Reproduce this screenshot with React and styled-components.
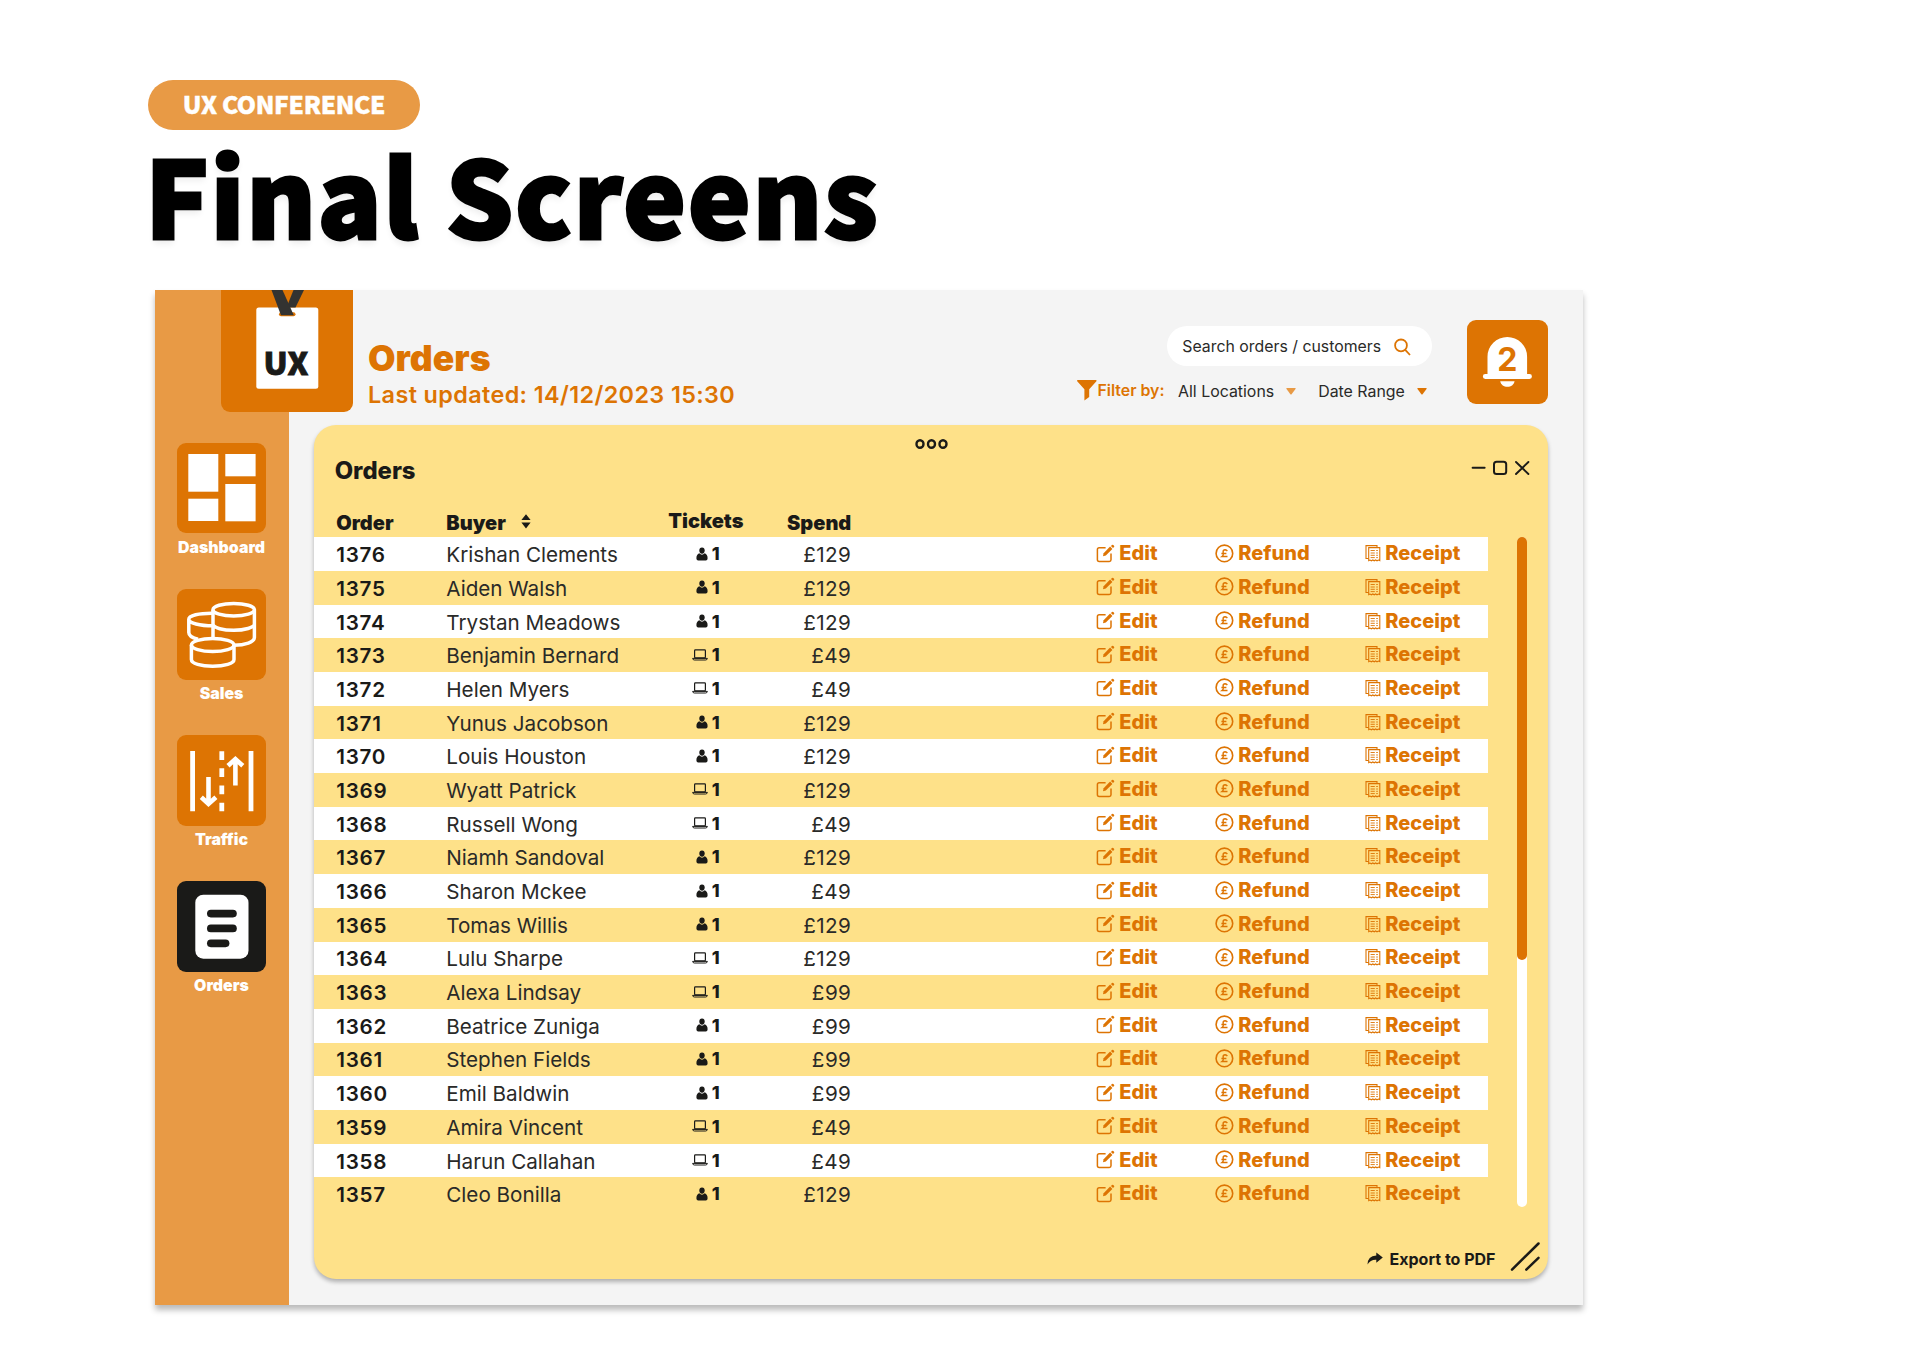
import React from "react";
import styled, { createGlobalStyle } from "styled-components";

const c = {
  orange: "#dd7403",
  sand: "#e89a45",
  yellow: "#fee189",
  ink: "#1a1a18",
  text: "#2a2a28",
  paper: "#f4f4f4",
};

const GlobalStyle = createGlobalStyle`
  * { box-sizing: border-box; }
  body { margin: 0; background: #fff; font-family: Inter, "Liberation Sans", sans-serif; color: ${c.ink}; }
  svg { display: block; flex: none; }
`;

const Page = styled.main`
  height: 1357px;
  padding: 80px 0 0 148px;
  overflow: hidden;
`;
const Tag = styled.div`
  width: 272px;
  height: 50px;
  border-radius: 25px;
  background: ${c.sand};
  color: #fff;
  display: flex;
  align-items: center;
  justify-content: center;
  font: 900 24.5px/48px "Noto Sans CJK JP", "Noto Sans", sans-serif;
  padding-bottom: 2px;
  letter-spacing: -0.35px;
  -webkit-text-stroke: 0.4px #fff;
`;
const Headline = styled.h1`
  margin: 0 0 0 -3px;
  height: 160px;
  font: 900 106px/127px "Noto Sans CJK JP", "Noto Sans", sans-serif;
  letter-spacing: 1.55px;
  color: #000;
  -webkit-text-stroke: 2.8px #000;
  white-space: nowrap;
  text-shadow: 0 5px 6px rgba(0, 0, 0, 0.07);
`;

const Window = styled.section`
  position: relative;
  margin-left: 7px;
  width: 1428px;
  height: 1014.5px;
  display: grid;
  grid-template-columns: 134px 1fr;
  background: ${c.paper};
  box-shadow: 0 5px 6px rgba(0, 0, 0, 0.27);
`;
const Sidebar = styled.nav`
  background: ${c.sand};
  padding: 153px 1px 0 0;
  display: flex;
  flex-direction: column;
  align-items: center;
`;
const NavItem = styled.a`
  height: 146px;
  display: flex;
  flex-direction: column;
  align-items: center;
`;
const NavTile = styled.span`
  width: 89.5px;
  height: ${(p) => p.$height || 91}px;
  border-radius: 9px;
  background: ${(p) => (p.$active ? c.ink : c.orange)};
  overflow: hidden;
`;
const NavLabel = styled.span`
  margin-top: auto;
  margin-bottom: 32.5px;
  font-size: 15.9px;
  font-weight: 900;
  line-height: 18px;
  color: #fff;
`;
const Logo = styled.div`
  position: absolute;
  left: 65.5px;
  top: 0;
  width: 132.5px;
  height: 122px;
  border-radius: 0 0 9px 9px;
  background: ${c.orange};
  overflow: hidden;
`;

const Main = styled.div`
  padding: 0 35px 0 24.7px;
  display: flex;
  flex-direction: column;
`;
const Header = styled.header`
  height: 135px;
  display: flex;
  padding-left: 54.3px;
`;
const Heading = styled.div`
  padding-top: 48px;
  color: ${c.orange};
  white-space: nowrap;
`;
const HeadingTitle = styled.h2`
  margin: 0;
  font-size: 35.5px;
  font-weight: 900;
  line-height: 41px;
`;
const Updated = styled.p`
  margin: 0;
  font-size: 23.4px;
  font-weight: 600;
  line-height: 32px;
  letter-spacing: 0.38px;
`;
const Tools = styled.div`
  margin-left: auto;
  padding-top: 35.5px;
  display: flex;
  flex-direction: column;
  align-items: flex-end;
`;
const Search = styled.div`
  width: 265px;
  height: 40px;
  border-radius: 20px;
  background: #fff;
  display: flex;
  align-items: center;
  justify-content: space-between;
  padding: 2px 20.5px 0 15.5px;
  font-size: 15.85px;
  line-height: 20px;
  white-space: nowrap;
  color: ${c.text};
`;
const Filters = styled.div`
  display: flex;
  align-items: center;
  height: 20px;
  margin-top: 15.5px;
  padding-right: 5px;
  font-size: 15.9px;
  white-space: nowrap;
  color: ${c.text};
`;
const FilterLabel = styled.span`
  color: ${c.orange};
  font-weight: 600;
  margin: 0 13.5px 1px 0;
`;
const Picker = styled.span`
  display: flex;
  align-items: center;
  gap: 12px;
  margin-left: ${(p) => p.$gap || 0}px;
`;
const FunnelMark = styled.span`
  padding-bottom: 2px;
`;
const BellTile = styled.div`
  margin: 30px 0 0 35px;
  width: 81.2px;
  height: 83.5px;
  border-radius: 9px;
  background: ${c.orange};
  position: relative;
`;
const BellCount = styled.span`
  position: absolute;
  inset: 0 0 5px;
  display: flex;
  align-items: center;
  justify-content: center;
  color: ${c.orange};
  font-size: 32px;
  font-weight: 700;
`;

const Panel = styled.section`
  height: 853.7px;
  border-radius: 22px;
  background: ${c.yellow};
  box-shadow: 0 3px 4px rgba(0, 0, 0, 0.28);
  display: flex;
  flex-direction: column;
`;
const Handle = styled.div`
  height: 30px;
  padding-top: 13px;
  display: flex;
  justify-content: center;
`;
const PanelBar = styled.div`
  height: 30px;
  padding: 0 18px 0 21px;
  display: flex;
  align-items: center;
  justify-content: space-between;
`;
const PanelTitle = styled.h3`
  margin: 0;
  font-size: 23.8px;
  font-weight: 800;
`;
const ControlGroup = styled.div`
  padding-bottom: 4px;
`;
const columns = "110px 222px 75px 108px 245px 119px 150px 1fr";
const HeadRow = styled.div`
  height: 52.3px;
  padding: 22px 0 2px 22.6px;
  width: 1174.6px;
  display: grid;
  grid-template-columns: ${columns};
  font-size: 20px;
  font-weight: 900;
  line-height: 28px;
`;
const HeadCell = styled.span`
  display: flex;
  align-items: center;
  gap: 15px;
  white-space: nowrap;
  justify-content: ${(p) => (p.$right ? "flex-end" : "flex-start")};
  padding-bottom: ${(p) => p.$lift || 0}px;
`;
const SortMark = styled.span`
  padding-bottom: 3px;
`;
const TableArea = styled.div`
  display: flex;
  justify-content: space-between;
  padding-right: 21.5px;
`;
const Rows = styled.div`
  width: 1174.6px;
`;
const Row = styled.div`
  height: 33.7px;
  padding-left: 22.6px;
  display: grid;
  grid-template-columns: ${columns};
  align-items: center;
  background: ${(p) => (p.$striped ? "#fff" : "transparent")};
  font-size: 20.65px;
  white-space: nowrap;
`;
const Cell = styled.span`
  padding-top: 1px;
  font-weight: ${(p) => (p.$strong ? 600 : 400)};
  color: ${(p) => (p.$strong ? c.ink : c.text)};
  text-align: ${(p) => (p.$right ? "right" : "left")};
  letter-spacing: ${(p) => p.$track || 0}px;
`;
const Ticket = styled.span`
  display: flex;
  align-items: center;
  justify-content: flex-end;
  gap: 4px;
  padding: 0 23.5px 1px 0;
  font-size: 18px;
  font-weight: 800;
`;
const Action = styled.a`
  display: flex;
  align-items: center;
  gap: 4px;
  padding-bottom: 2px;
  color: ${c.orange};
  font-size: 20px;
  font-weight: 850;
`;
const Track = styled.div`
  width: 9.6px;
  height: 669.5px;
  border-radius: 5px;
  background: #fff;
`;
const Thumb = styled.div`
  height: 423px;
  border-radius: 5px;
  background: ${c.orange};
`;
const Footer = styled.footer`
  height: 34px;
  margin: auto 8px 5px 0;
  display: flex;
  align-items: center;
  justify-content: flex-end;
  font-size: 16px;
  font-weight: 700;
`;
const ExportLink = styled.a`
  display: flex;
  align-items: center;
  gap: 6.5px;
  padding: 4px 14.5px 0 0;
`;

const DashboardIcon = () => (
  <svg width="89.5" height="89.5" viewBox="0 0 89.5 89.5" fill="#fff">
    <rect x="11.3" y="11" width="30" height="37.7" />
    <rect x="11.3" y="55.7" width="30" height="22.3" />
    <rect x="48.3" y="11" width="30.3" height="22.3" />
    <rect x="48.3" y="41" width="30.3" height="37.3" />
  </svg>
);
const SalesIcon = () => (
  <svg width="89.5" height="91" viewBox="0 0 89.5 91" fill="none" stroke="#fff" strokeWidth="3.5">
    <ellipse cx="56.7" cy="20.7" rx="20.7" ry="6.3" />
    <path d="M36 20.7V49M77.4 20.7V48.5C77.4 53 68 56.3 57 56.3M36 35.5C37 39 46 41.3 56.7 41.3S77.4 38.5 77.4 35" />
    <path d="M36 24.2C22 24 11.8 26.5 11.8 30.3S23 36.8 36 36.8M11.8 30.3V43.5C11.8 46.5 15 48.8 21 50.3" />
    <ellipse cx="35.7" cy="56" rx="21.3" ry="6.6" />
    <path d="M14.4 56V70.5C14.4 74.5 24 77.3 35.7 77.3S57 74.5 57 70.5V56" />
  </svg>
);
const TrafficIcon = () => (
  <svg width="89.5" height="91" viewBox="0 0 89.5 91" fill="none" stroke="#fff" strokeWidth="4.8">
    <path d="M15.6 16V76.3M74 16V76.3" />
    <path d="M44.8 16.2V25M44.8 33.3V42M44.8 50.5V59.2M44.8 67.7V76.3" />
    <path d="M31.5 42V69M24.3 62.3L31.5 69L38.9 62.3" strokeWidth="4.6" />
    <path d="M58.4 50.5V24M51 30.8L58.4 24L65.8 30.8" strokeWidth="4.6" />
  </svg>
);
const OrdersIcon = () => (
  <svg width="89.5" height="91" viewBox="0 0 89.5 91" fill={c.ink}>
    <rect x="18.3" y="13.7" width="53.2" height="64" rx="8" fill="#fff" />
    <rect x="30" y="28.7" width="29.8" height="7.7" rx="3.85" />
    <rect x="30" y="43.6" width="29.8" height="7.7" rx="3.85" />
    <rect x="30" y="58.5" width="22.4" height="7.7" rx="3.85" />
  </svg>
);
const BadgeArt = () => (
  <svg width="132.5" height="122" viewBox="0 0 132.5 122">
    <rect x="35.3" y="17.5" width="62" height="81.3" rx="2.5" fill="#fff" />
    <rect x="58" y="22.3" width="16.5" height="4" rx="2" fill={c.orange} />
    <path d="M72.5 0H83L74.5 17.5H65.5Z" fill="#333331" />
    <path d="M50.5 0H61.5L72.8 25.3H60Z" fill="#333331" />
    <text x="42.6" y="84.6" fontFamily="Noto Sans CJK JP, Noto Sans, sans-serif" fontWeight="900" fontSize="31" textLength="44.6" lengthAdjust="spacingAndGlyphs" fill={c.ink} stroke={c.ink} strokeWidth="0.9">UX</text>
  </svg>
);
const BellIcon = () => (
  <svg width="81.2" height="83.5" viewBox="0 0 81.2 83.5" fill="#fff">
    <path d="M20.5 54V36.7a19.8 19.8 0 0 1 39.6 0V54h2.4a2.4 2.4 0 0 1 0 4.9H18.3a2.4 2.4 0 0 1 0-4.9Z" />
    <path d="M33.2 61.2H47.6C46.8 64.8 44 66.8 40.4 66.8S34 64.8 33.2 61.2Z" />
  </svg>
);
const SearchIcon = () => (
  <svg width="17" height="18" viewBox="0 0 17 18" fill="none" stroke={c.orange} strokeWidth="1.8">
    <circle cx="7" cy="7.4" r="5.9" />
    <path d="M11 11.7L16 17" />
  </svg>
);
const FunnelIcon = () => (
  <svg width="20" height="21" viewBox="0 0 20 21" fill={c.orange}>
    <path d="M.6 0H18.8Q20 .1 19.4 1.3L12.2 9.3V17L7.4 20.6V9.3L.2 1.3Q-.2 .2 .6 0Z" />
  </svg>
);
const Caret = ({ fill }) => (
  <svg width="10" height="7" viewBox="0 0 10 7" fill={fill}>
    <path d="M.8 0H9.2Q10 .2 9.5 1L5.6 6.2Q5 6.9 4.4 6.2L.5 1Q0 .2 .8 0Z" />
  </svg>
);
const DotsIcon = () => (
  <svg width="34" height="12" viewBox="0 0 34 12" fill="none" stroke={c.ink} strokeWidth="2.4">
    <ellipse cx="6" cy="6" rx="3.5" ry="3.8" />
    <ellipse cx="17.5" cy="6" rx="3.5" ry="3.8" />
    <ellipse cx="29" cy="6" rx="3.5" ry="3.8" />
  </svg>
);
const WindowControls = () => (
  <svg width="60" height="16" viewBox="0 0 60 16" fill="none" stroke={c.ink} strokeWidth="2" strokeLinecap="round">
    <path d="M2.6 7.8H14.6" />
    <rect x="24" y="1.7" width="12.2" height="12.4" rx="2.6" />
    <path d="M46 2L58.4 14M58.4 2L46 14" strokeWidth="1.9" />
  </svg>
);
const SortIcon = () => (
  <svg width="10" height="15" viewBox="0 0 10 15" fill={c.ink}>
    <path d="M5 .3L9.6 6H.4ZM5 14.5L9.6 8.6H.4Z" />
  </svg>
);
const PersonIcon = () => (
  <svg width="12" height="14" viewBox="0 0 12 14" fill={c.ink}>
    <ellipse cx="6" cy="3.6" rx="2.7" ry="3.1" />
    <path d="M3.3 6.3Q6 9 8.7 6.3Q11.7 7.6 11.6 11.4Q11.5 13.4 9.8 13.5H2.2Q.5 13.4 .4 11.4Q.3 7.6 3.3 6.3Z" />
  </svg>
);
const LaptopIcon = () => (
  <svg width="16" height="12" viewBox="0 0 16 12" fill="none" stroke={c.ink} strokeWidth="1.2">
    <rect x="2.6" y=".9" width="10.8" height="8" rx=".8" />
    <path d="M.6 9.4H15.4Q15.2 11 13.6 11H2.4Q.8 11 .6 9.4Z" strokeWidth="1" />
  </svg>
);
const EditIcon = () => (
  <svg width="19" height="19" viewBox="0 0 19 19" fill="none" stroke={c.orange} strokeWidth="1.5">
    <path d="M9.6 3.7H3.2Q1.4 3.7 1.4 5.6V15.8Q1.4 17.5 3.2 17.5H13.3Q15 17.5 15 15.8V9.5" />
    <path d="M7 12.3L7.6 9.2L14.1 2.6L16.4 4.9L9.8 11.6Z" fill={c.orange} stroke="none" />
    <path d="M14.9 2L16 .9Q16.6 .4 17.3 1L18 1.7Q18.6 2.4 18 3.1L17 4.1Z" fill={c.orange} stroke="none" />
  </svg>
);
const RefundIcon = () => (
  <svg width="19" height="19" viewBox="0 0 19 19" fill="none" stroke={c.orange} strokeWidth="1.6">
    <circle cx="9.4" cy="9.4" r="8.3" />
    <path d="M12.3 7.1Q11.6 5.8 10.2 5.8Q8.1 6 8.1 7.7Q8.1 8.6 8.4 9.6Q8.5 11.4 7 12.5H12.5M6.4 9.5H11.4" strokeWidth="1.4" />
  </svg>
);
const ReceiptIcon = () => (
  <svg width="16" height="18" viewBox="0 0 16 18" fill="none" stroke={c.orange} strokeWidth="1.1">
    <path d="M3.5 14.5H1V1.6H12V3.5" />
    <path d="M3.7 3.6H14.8V16.6L13.4 16L12 16.8L10.6 16L9.2 16.8L7.8 16L6.4 16.8L5 16L3.7 16.6Z" />
    <path d="M5.6 6.5H9.8M5.6 9H9.8M5.6 11.3H9.8M5.6 13.6H9.8M11.2 6.5H12.9M11.2 9H12.9M11.2 11.3H12.9M11.2 13.6H12.9" strokeWidth=".9" />
  </svg>
);
const ShareIcon = () => (
  <svg width="16" height="13" viewBox="0 0 16 13" fill={c.ink}>
    <path d="M9.3 .4L15.8 5.6L9.3 10.8V7.8Q3.4 7.5 .5 12.6Q.6 4 9.3 3.5Z" />
  </svg>
);
const ResizeIcon = () => (
  <svg width="30" height="30" viewBox="0 0 30 30" fill="none" stroke={c.ink} strokeWidth="2.5" strokeLinecap="round">
    <path d="M2 27.6L28.5 1.5M16.3 27.6L28.5 15.8" />
  </svg>
);

const nav = [
  { label: "Dashboard", icon: DashboardIcon, height: 89.5 },
  { label: "Sales", icon: SalesIcon },
  { label: "Traffic", icon: TrafficIcon },
  { label: "Orders", icon: OrdersIcon, active: true },
];

const orders = [
  [1376, "Krishan Clements", "person", 129],
  [1375, "Aiden Walsh", "person", 129],
  [1374, "Trystan Meadows", "person", 129],
  [1373, "Benjamin Bernard", "laptop", 49],
  [1372, "Helen Myers", "laptop", 49],
  [1371, "Yunus Jacobson", "person", 129],
  [1370, "Louis Houston", "person", 129],
  [1369, "Wyatt Patrick", "laptop", 129],
  [1368, "Russell Wong", "laptop", 49],
  [1367, "Niamh Sandoval", "person", 129],
  [1366, "Sharon Mckee", "person", 49],
  [1365, "Tomas Willis", "person", 129],
  [1364, "Lulu Sharpe", "laptop", 129],
  [1363, "Alexa Lindsay", "laptop", 99],
  [1362, "Beatrice Zuniga", "person", 99],
  [1361, "Stephen Fields", "person", 99],
  [1360, "Emil Baldwin", "person", 99],
  [1359, "Amira Vincent", "laptop", 49],
  [1358, "Harun Callahan", "laptop", 49],
  [1357, "Cleo Bonilla", "person", 129],
];

export default function App() {
  return (
    <Page>
      <GlobalStyle />
      <Tag>UX CONFERENCE</Tag>
      <Headline>Final Screens</Headline>
      <Window>
        <Sidebar>
          {nav.map(({ label, icon: Icon, height, active }) => (
            <NavItem key={label}>
              <NavTile $height={height} $active={active}>
                <Icon />
              </NavTile>
              <NavLabel>{label}</NavLabel>
            </NavItem>
          ))}
        </Sidebar>
        <Main>
          <Header>
            <Heading>
              <HeadingTitle>Orders</HeadingTitle>
              <Updated>Last updated: 14/12/2023 15:30</Updated>
            </Heading>
            <Tools>
              <Search>
                Search orders / customers
                <SearchIcon />
              </Search>
              <Filters>
                <FunnelMark>
                  <FunnelIcon />
                </FunnelMark>
                <FilterLabel>Filter by:</FilterLabel>
                <Picker>
                  All Locations
                  <Caret fill={c.sand} />
                </Picker>
                <Picker $gap={22}>
                  Date Range
                  <Caret fill={c.orange} />
                </Picker>
              </Filters>
            </Tools>
            <BellTile>
              <BellIcon />
              <BellCount>2</BellCount>
            </BellTile>
          </Header>
          <Panel>
            <Handle>
              <DotsIcon />
            </Handle>
            <PanelBar>
              <PanelTitle>Orders</PanelTitle>
              <ControlGroup>
                <WindowControls />
              </ControlGroup>
            </PanelBar>
            <HeadRow>
              <HeadCell>Order</HeadCell>
              <HeadCell>
                Buyer
                <SortMark>
                  <SortIcon />
                </SortMark>
              </HeadCell>
              <HeadCell $lift={3}>Tickets</HeadCell>
              <HeadCell $right>Spend</HeadCell>
            </HeadRow>
            <TableArea>
              <Rows>
                {orders.map(([id, buyer, kind, spend], i) => (
                  <Row key={id} $striped={i % 2 === 0}>
                    <Cell $strong $track={0.7}>
                      {id}
                    </Cell>
                    <Cell>{buyer}</Cell>
                    <Ticket>
                      {kind === "person" ? <PersonIcon /> : <LaptopIcon />}1
                    </Ticket>
                    <Cell $right $track={0.4}>
                      £{spend}
                    </Cell>
                    <span />
                    <Action>
                      <EditIcon />
                      Edit
                    </Action>
                    <Action>
                      <RefundIcon />
                      Refund
                    </Action>
                    <Action>
                      <ReceiptIcon />
                      Receipt
                    </Action>
                  </Row>
                ))}
              </Rows>
              <Track>
                <Thumb />
              </Track>
            </TableArea>
            <Footer>
              <ExportLink>
                <ShareIcon />
                Export to PDF
              </ExportLink>
              <ResizeIcon />
            </Footer>
          </Panel>
        </Main>
        <Logo>
          <BadgeArt />
        </Logo>
      </Window>
    </Page>
  );
}
